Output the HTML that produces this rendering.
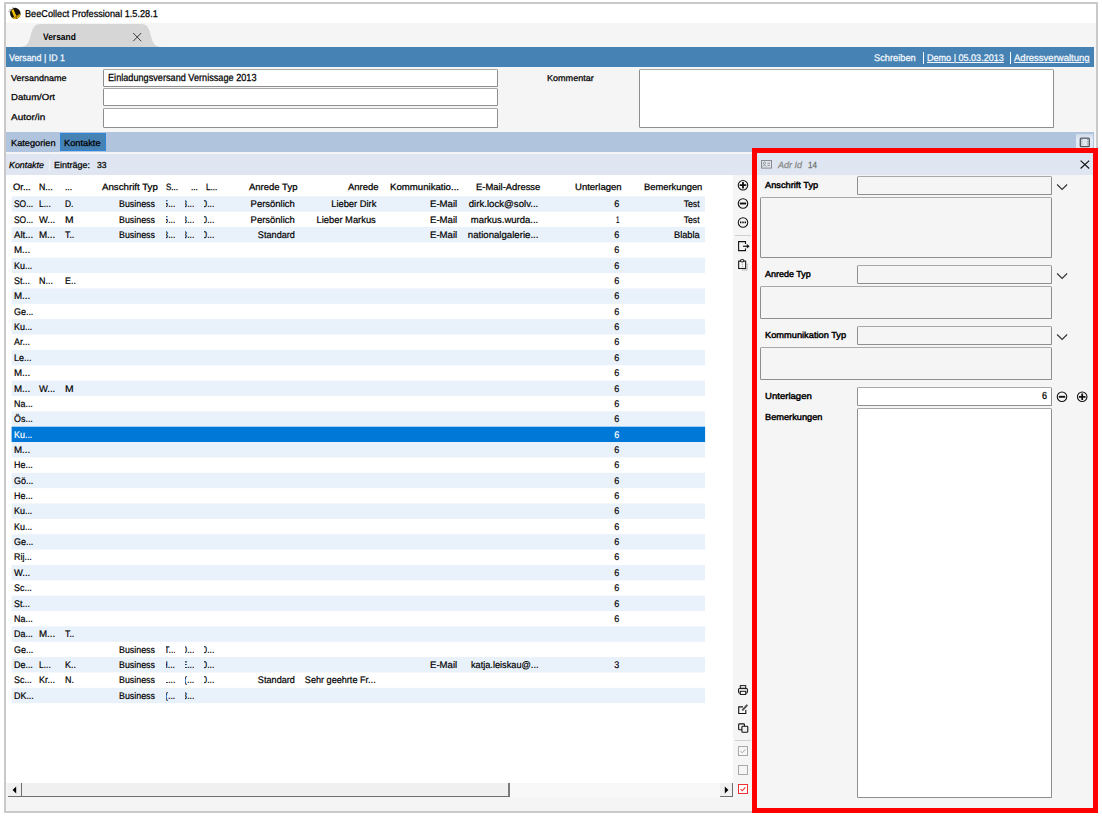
<!DOCTYPE html>
<html lang="de">
<head>
<meta charset="utf-8">
<title>BeeCollect Professional 1.5.28.1</title>
<style>
html,body{margin:0;padding:0;background:#fff;}
body{width:1102px;height:816px;position:relative;overflow:hidden;
  font-family:"Liberation Sans",sans-serif;font-size:11px;color:#000;text-rendering:geometricPrecision;-webkit-text-stroke:0.25px;}
*{box-sizing:border-box;}
.a{position:absolute;}
.t{position:absolute;white-space:nowrap;line-height:14px;height:14px;transform-origin:0 50%;}
.b{font-weight:bold;-webkit-text-stroke:0;}
.sb{font-weight:normal;-webkit-text-stroke:0.42px;}
.i{font-style:italic;}
#frame{left:4px;top:2px;width:1094px;height:811px;border:2px solid #cac8c8;background:#f5f5f5;}
#title{left:6px;top:4px;width:1090px;height:19px;background:#fff;}
#bluebar{left:6px;top:47px;width:1088px;height:20px;background:#4682b4;}
.inp{position:absolute;background:#fff;border:1px solid #8e8e8e;border-top-color:#a9a9a9;border-radius:1.5px;}
.dis{position:absolute;background:#f5f5f5;border:1px solid #8e8e8e;border-top-color:#a9a9a9;border-radius:1.5px;}
#tabbar{left:6px;top:132px;width:1088px;height:20px;background:#b0c4de;}
#seltab{left:60px;top:133px;width:46px;height:18px;background:#4682b4;border:1px solid #2d86d9;}
#khead{left:6px;top:154px;width:746px;height:21px;background:#dfe6f1;}
#tablebg{left:6px;top:175px;width:727px;height:608px;background:#fff;}
.row{position:absolute;left:11.5px;width:693.5px;height:15.36px;-webkit-text-stroke:0.2px;font-size:9.60px;}
.row.sel{color:#fff;}
.c{position:absolute;top:0.57px;white-space:nowrap;line-height:14px;height:14px;transform-origin:0 50%;}
.c.r{transform-origin:100% 50%;}
.k{position:absolute;top:0.57px;height:14px;line-height:14px;overflow:hidden;display:flex;justify-content:flex-end;white-space:nowrap;}
.k i{font-style:normal;flex:none;transform-origin:100% 50%;}
#panelhead{left:757px;top:153px;width:336px;height:22px;background:#dfe6f1;}
#red{left:752px;top:148px;width:346px;height:665px;border:5px solid #ff0000;}
svg{position:absolute;overflow:visible;}
</style>
</head>
<body>
<div id="frame" class="a"></div>
<div id="title" class="a"></div>
<!-- bee icon -->
<svg style="left:6px;top:4px" width="18" height="18" viewBox="0 0 18 18">
  <defs><clipPath id="beeclip"><ellipse cx="9.3" cy="9.4" rx="5.2" ry="5.6" transform="rotate(-20 9.3 9.4)"/></clipPath></defs>
  <path d="M6.6 3.2 L8 4.6 M3.6 5.6 L5.2 6.4" stroke="#555" stroke-width="0.8" fill="none"/>
  <ellipse cx="3.6" cy="7.6" rx="1.6" ry="1.1" fill="#c9c9c9" transform="rotate(35 3.6 7.6)"/>
  <ellipse cx="9.3" cy="9.4" rx="5.2" ry="5.6" fill="#17120b" transform="rotate(-20 9.3 9.4)"/>
  <g clip-path="url(#beeclip)">
    <path d="M5.2 6.0 L7.4 5.2 L10.6 12.4 L8.4 13.4 Z" fill="#f5c400"/>
    <path d="M5.6 14.2 L14.6 9.6 L15.4 12.0 L9 16.2 Z" fill="#e9b000"/>
    <path d="M8.2 13.6 L13.8 10.6 M10.2 15 L10.8 12.4" stroke="#5a4200" stroke-width="0.6" fill="none"/>
  </g>
</svg>
<!-- window tab -->
<svg style="left:19px;top:24px" width="144" height="23" viewBox="0 0 144 23">
  <path d="M0.5 23 C8 23 9.5 19.5 11.5 12 C13.5 4.5 15 0 21.5 0 L122 0 C128.5 0 130 4.5 132 12 C134 19.5 135.5 23 143 23 Z" fill="#d6d6d6"/>
  <path d="M114.2 9 L122.2 17.2 M122.2 9 L114.2 17.2" stroke="#3a3a3a" stroke-width="1" fill="none"/>
</svg>

<!-- blue bar -->
<div id="bluebar" class="a">
  <span class="a" style="left:917px;top:5px;width:1px;height:12px;background:#fbfcfe;"></span>
  <span class="a" style="left:1004px;top:5px;width:1px;height:12px;background:#fbfcfe;"></span>
</div>

<!-- top form -->
<div class="inp" style="left:103px;top:69px;width:395px;height:18px;"></div>
<div class="inp" style="left:103px;top:88px;width:395px;height:18px;"></div>
<div class="inp" style="left:103px;top:108px;width:395px;height:20px;"></div>
<div class="inp" style="left:639px;top:69px;width:415px;height:59px;"></div>

<!-- tab bar -->
<div id="tabbar" class="a"></div>
<div id="seltab" class="a"></div>
<div class="a" style="left:1076px;top:134px;width:17px;height:14px;background:linear-gradient(#cfdbec,#e6ecf5 45%,#dbe4f0);"></div>
<svg style="left:1079px;top:136.6px" width="12" height="11" viewBox="0 0 12 11">
  <rect x="1.3" y="1.1" width="9" height="8.6" rx="1" fill="#dfe6f0" stroke="#50565e" stroke-width="1.3"/>
  <path d="M2.9 2 V9 M8.7 2 V9" stroke="#8d949e" stroke-width="1" stroke-dasharray="1.2 1"/>
</svg>

<!-- Kontakte header -->
<div id="khead" class="a"></div>
<span class="a" style="left:49px;top:159px;width:1px;height:12px;background:#f4f5f8;"></span>

<!-- table -->
<div id="tablebg" class="a"></div>
<svg style="left:0;top:0" width="1102" height="816" viewBox="0 0 1102 816"><rect x="11.6" y="196.30" width="693.5" height="15.36" fill="#e9f1fb"/><rect x="11.6" y="227.02" width="693.5" height="15.36" fill="#e9f1fb"/><rect x="11.6" y="257.74" width="693.5" height="15.36" fill="#e9f1fb"/><rect x="11.6" y="288.46" width="693.5" height="15.36" fill="#e9f1fb"/><rect x="11.6" y="319.18" width="693.5" height="15.36" fill="#e9f1fb"/><rect x="11.6" y="349.90" width="693.5" height="15.36" fill="#e9f1fb"/><rect x="11.6" y="380.62" width="693.5" height="15.36" fill="#e9f1fb"/><rect x="11.6" y="411.34" width="693.5" height="15.36" fill="#e9f1fb"/><rect x="11.6" y="426.70" width="693.5" height="15.36" fill="#0078d7"/><rect x="11.6" y="442.06" width="693.5" height="15.36" fill="#e9f1fb"/><rect x="11.6" y="472.78" width="693.5" height="15.36" fill="#e9f1fb"/><rect x="11.6" y="503.50" width="693.5" height="15.36" fill="#e9f1fb"/><rect x="11.6" y="534.22" width="693.5" height="15.36" fill="#e9f1fb"/><rect x="11.6" y="564.94" width="693.5" height="15.36" fill="#e9f1fb"/><rect x="11.6" y="595.66" width="693.5" height="15.36" fill="#e9f1fb"/><rect x="11.6" y="626.38" width="693.5" height="15.36" fill="#e9f1fb"/><rect x="11.6" y="657.10" width="693.5" height="15.36" fill="#e9f1fb"/><rect x="11.6" y="687.82" width="693.5" height="15.36" fill="#e9f1fb"/></svg>
<div class="row alt" style="top:196.30px"><span class="c" style="top:1.70px;left:2.0px;transform:scaleX(0.8784)">SO...</span><span class="c" style="top:1.70px;left:27.9px;transform:scaleX(0.8851)">L...</span><span class="c" style="top:1.70px;left:53.9px;transform:scaleX(0.8756)">D.</span><span class="c r" style="top:1.70px;right:549.7px;transform:scaleX(0.9222)">Business</span><span class="k" style="top:1.70px;left:154.8px;width:9.0px"><i style="transform:scaleX(0.900)">5...</i></span><span class="k" style="top:1.70px;left:173.3px;width:9.6px"><i style="transform:scaleX(0.900)">3...</i></span><span class="k" style="top:1.70px;left:192.4px;width:10.3px"><i style="transform:scaleX(0.900)">0...</i></span><span class="c r" style="top:1.70px;right:410.1px;transform:scaleX(0.9868)">Persönlich</span><span class="c r" style="top:1.70px;right:329.0px;transform:scaleX(0.9744)">Lieber Dirk</span><span class="c r" style="top:1.70px;right:247.9px;transform:scaleX(1.0006)">E-Mail</span><span class="c r" style="top:1.70px;right:166.8px;transform:scaleX(1.0033)">dirk.lock@solv...</span><span class="c r" style="top:1.70px;right:85.7px;transform:scaleX(0.9371)">6</span><span class="c r" style="top:1.70px;right:5.1px;transform:scaleX(0.9037)">Test</span></div>
<div class="row" style="top:211.66px"><span class="c" style="top:2.34px;left:2.0px;transform:scaleX(0.8784)">SO...</span><span class="c" style="top:2.34px;left:27.9px;transform:scaleX(0.9805)">W...</span><span class="c" style="top:2.34px;left:53.9px;transform:scaleX(1.0761)">M</span><span class="c r" style="top:2.34px;right:549.7px;transform:scaleX(0.9222)">Business</span><span class="k" style="top:2.34px;left:154.8px;width:9.0px"><i style="transform:scaleX(0.900)">5...</i></span><span class="k" style="top:2.34px;left:173.3px;width:9.6px"><i style="transform:scaleX(0.900)">3...</i></span><span class="k" style="top:2.34px;left:192.4px;width:10.3px"><i style="transform:scaleX(0.900)">0...</i></span><span class="c r" style="top:2.34px;right:410.1px;transform:scaleX(0.9868)">Persönlich</span><span class="c r" style="top:2.34px;right:329.0px;transform:scaleX(0.9756)">Lieber Markus</span><span class="c r" style="top:2.34px;right:247.9px;transform:scaleX(1.0006)">E-Mail</span><span class="c r" style="top:2.34px;right:166.8px;transform:scaleX(0.9891)">markus.wurda...</span><span class="c r" style="top:2.34px;right:85.7px;transform:scaleX(0.6372)">1</span><span class="c r" style="top:2.34px;right:5.1px;transform:scaleX(0.9037)">Test</span></div>
<div class="row alt" style="top:227.02px"><span class="c" style="top:1.98px;left:2.0px;transform:scaleX(1.0004)">Alt...</span><span class="c" style="top:1.98px;left:27.9px;transform:scaleX(1.0133)">M...</span><span class="c" style="top:1.98px;left:53.9px;transform:scaleX(0.9183)">T..</span><span class="c r" style="top:1.98px;right:549.7px;transform:scaleX(0.9222)">Business</span><span class="k" style="top:1.98px;left:154.8px;width:9.0px"><i style="transform:scaleX(0.900)">3...</i></span><span class="k" style="top:1.98px;left:173.3px;width:9.6px"><i style="transform:scaleX(0.900)">3...</i></span><span class="k" style="top:1.98px;left:192.4px;width:10.3px"><i style="transform:scaleX(0.900)">0...</i></span><span class="c r" style="top:1.98px;right:410.1px;transform:scaleX(0.9528)">Standard</span><span class="c r" style="top:1.98px;right:247.9px;transform:scaleX(1.0006)">E-Mail</span><span class="c r" style="top:1.98px;right:166.8px;transform:scaleX(1.0028)">nationalgalerie...</span><span class="c r" style="top:1.98px;right:85.7px;transform:scaleX(0.9371)">6</span><span class="c r" style="top:1.98px;right:5.1px;transform:scaleX(0.9637)">Blabla</span></div>
<div class="row" style="top:242.38px"><span class="c" style="top:1.62px;left:2.0px;transform:scaleX(1.0133)">M...</span><span class="c r" style="top:1.62px;right:85.7px;transform:scaleX(0.9371)">6</span></div>
<div class="row alt" style="top:257.74px"><span class="c" style="top:2.26px;left:2.0px;transform:scaleX(0.9300)">Ku...</span><span class="c r" style="top:2.26px;right:85.7px;transform:scaleX(0.9371)">6</span></div>
<div class="row" style="top:273.10px"><span class="c" style="top:1.90px;left:2.0px;transform:scaleX(0.9300)">St...</span><span class="c" style="top:1.90px;left:27.9px;transform:scaleX(0.9300)">N...</span><span class="c" style="top:1.90px;left:53.9px;transform:scaleX(0.9300)">E..</span><span class="c r" style="top:1.90px;right:85.7px;transform:scaleX(0.9371)">6</span></div>
<div class="row alt" style="top:288.46px"><span class="c" style="top:1.54px;left:2.0px;transform:scaleX(1.0133)">M...</span><span class="c r" style="top:1.54px;right:85.7px;transform:scaleX(0.9371)">6</span></div>
<div class="row" style="top:303.82px"><span class="c" style="top:2.18px;left:2.0px;transform:scaleX(0.9300)">Ge...</span><span class="c r" style="top:2.18px;right:85.7px;transform:scaleX(0.9371)">6</span></div>
<div class="row alt" style="top:319.18px"><span class="c" style="top:1.82px;left:2.0px;transform:scaleX(0.9300)">Ku...</span><span class="c r" style="top:1.82px;right:85.7px;transform:scaleX(0.9371)">6</span></div>
<div class="row" style="top:334.54px"><span class="c" style="top:1.46px;left:2.0px;transform:scaleX(0.9300)">Ar...</span><span class="c r" style="top:1.46px;right:85.7px;transform:scaleX(0.9371)">6</span></div>
<div class="row alt" style="top:349.90px"><span class="c" style="top:2.10px;left:2.0px;transform:scaleX(0.9300)">Le...</span><span class="c r" style="top:2.10px;right:85.7px;transform:scaleX(0.9371)">6</span></div>
<div class="row" style="top:365.26px"><span class="c" style="top:1.74px;left:2.0px;transform:scaleX(1.0133)">M...</span><span class="c r" style="top:1.74px;right:85.7px;transform:scaleX(0.9371)">6</span></div>
<div class="row alt" style="top:380.62px"><span class="c" style="top:2.38px;left:2.0px;transform:scaleX(1.0133)">M...</span><span class="c" style="top:2.38px;left:27.9px;transform:scaleX(0.9805)">W...</span><span class="c" style="top:2.38px;left:53.9px;transform:scaleX(1.0761)">M</span><span class="c r" style="top:2.38px;right:85.7px;transform:scaleX(0.9371)">6</span></div>
<div class="row" style="top:395.98px"><span class="c" style="top:2.02px;left:2.0px;transform:scaleX(0.9300)">Na...</span><span class="c r" style="top:2.02px;right:85.7px;transform:scaleX(0.9371)">6</span></div>
<div class="row alt" style="top:411.34px"><span class="c" style="top:1.66px;left:2.0px;transform:scaleX(0.9300)">Ös...</span><span class="c r" style="top:1.66px;right:85.7px;transform:scaleX(0.9371)">6</span></div>
<div class="row sel" style="top:426.70px"><span class="c" style="top:2.30px;left:2.0px;transform:scaleX(0.9300)">Ku...</span><span class="c r" style="top:2.30px;right:85.7px;transform:scaleX(0.9371)">6</span></div>
<div class="row alt" style="top:442.06px"><span class="c" style="top:1.94px;left:2.0px;transform:scaleX(1.0133)">M...</span><span class="c r" style="top:1.94px;right:85.7px;transform:scaleX(0.9371)">6</span></div>
<div class="row" style="top:457.42px"><span class="c" style="top:1.58px;left:2.0px;transform:scaleX(0.9300)">He...</span><span class="c r" style="top:1.58px;right:85.7px;transform:scaleX(0.9371)">6</span></div>
<div class="row alt" style="top:472.78px"><span class="c" style="top:2.22px;left:2.0px;transform:scaleX(0.9300)">Gö...</span><span class="c r" style="top:2.22px;right:85.7px;transform:scaleX(0.9371)">6</span></div>
<div class="row" style="top:488.14px"><span class="c" style="top:1.86px;left:2.0px;transform:scaleX(0.9300)">He...</span><span class="c r" style="top:1.86px;right:85.7px;transform:scaleX(0.9371)">6</span></div>
<div class="row alt" style="top:503.50px"><span class="c" style="top:1.50px;left:2.0px;transform:scaleX(0.9300)">Ku...</span><span class="c r" style="top:1.50px;right:85.7px;transform:scaleX(0.9371)">6</span></div>
<div class="row" style="top:518.86px"><span class="c" style="top:2.14px;left:2.0px;transform:scaleX(0.9300)">Ku...</span><span class="c r" style="top:2.14px;right:85.7px;transform:scaleX(0.9371)">6</span></div>
<div class="row alt" style="top:534.22px"><span class="c" style="top:1.78px;left:2.0px;transform:scaleX(0.9300)">Ge...</span><span class="c r" style="top:1.78px;right:85.7px;transform:scaleX(0.9371)">6</span></div>
<div class="row" style="top:549.58px"><span class="c" style="top:1.42px;left:2.0px;transform:scaleX(0.9300)">Rij...</span><span class="c r" style="top:1.42px;right:85.7px;transform:scaleX(0.9371)">6</span></div>
<div class="row alt" style="top:564.94px"><span class="c" style="top:2.06px;left:2.0px;transform:scaleX(0.9805)">W...</span><span class="c r" style="top:2.06px;right:85.7px;transform:scaleX(0.9371)">6</span></div>
<div class="row" style="top:580.30px"><span class="c" style="top:1.70px;left:2.0px;transform:scaleX(0.9300)">Sc...</span><span class="c r" style="top:1.70px;right:85.7px;transform:scaleX(0.9371)">6</span></div>
<div class="row alt" style="top:595.66px"><span class="c" style="top:2.34px;left:2.0px;transform:scaleX(0.9300)">St...</span><span class="c r" style="top:2.34px;right:85.7px;transform:scaleX(0.9371)">6</span></div>
<div class="row" style="top:611.02px"><span class="c" style="top:1.98px;left:2.0px;transform:scaleX(0.9300)">Na...</span><span class="c r" style="top:1.98px;right:85.7px;transform:scaleX(0.9371)">6</span></div>
<div class="row alt" style="top:626.38px"><span class="c" style="top:1.62px;left:2.0px;transform:scaleX(0.9300)">Da...</span><span class="c" style="top:1.62px;left:27.9px;transform:scaleX(1.0133)">M...</span><span class="c" style="top:1.62px;left:53.9px;transform:scaleX(0.9183)">T..</span></div>
<div class="row" style="top:641.74px"><span class="c" style="top:2.26px;left:2.0px;transform:scaleX(0.9300)">Ge...</span><span class="c r" style="top:2.26px;right:549.7px;transform:scaleX(0.9222)">Business</span><span class="k" style="top:2.26px;left:154.8px;width:9.0px"><i style="transform:scaleX(0.900)">T...</i></span><span class="k" style="top:2.26px;left:173.3px;width:9.6px"><i style="transform:scaleX(0.900)">0...</i></span><span class="k" style="top:2.26px;left:192.4px;width:10.3px"><i style="transform:scaleX(0.900)">0...</i></span></div>
<div class="row alt" style="top:657.10px"><span class="c" style="top:1.90px;left:2.0px;transform:scaleX(0.9300)">De...</span><span class="c" style="top:1.90px;left:27.9px;transform:scaleX(0.8851)">L...</span><span class="c" style="top:1.90px;left:53.9px;transform:scaleX(0.9300)">K..</span><span class="c r" style="top:1.90px;right:549.7px;transform:scaleX(0.9222)">Business</span><span class="k" style="top:1.90px;left:154.8px;width:9.0px"><i style="transform:scaleX(0.900)">H...</i></span><span class="k" style="top:1.90px;left:173.3px;width:9.6px"><i style="transform:scaleX(0.900)">E...</i></span><span class="k" style="top:1.90px;left:192.4px;width:10.3px"><i style="transform:scaleX(0.900)">0...</i></span><span class="c r" style="top:1.90px;right:247.9px;transform:scaleX(1.0006)">E-Mail</span><span class="c r" style="top:1.90px;right:166.8px;transform:scaleX(0.9585)">katja.leiskau@...</span><span class="c r" style="top:1.90px;right:85.7px;transform:scaleX(0.9371)">3</span></div>
<div class="row" style="top:672.46px"><span class="c" style="top:1.54px;left:2.0px;transform:scaleX(0.9300)">Sc...</span><span class="c" style="top:1.54px;left:27.9px;transform:scaleX(0.9300)">Kr...</span><span class="c" style="top:1.54px;left:53.9px;transform:scaleX(0.9300)">N.</span><span class="c r" style="top:1.54px;right:549.7px;transform:scaleX(0.9222)">Business</span><span class="k" style="top:1.54px;left:154.8px;width:9.0px"><i style="transform:scaleX(0.900)">L...</i></span><span class="k" style="top:1.54px;left:173.3px;width:9.6px"><i style="transform:scaleX(0.900)">(...</i></span><span class="k" style="top:1.54px;left:192.4px;width:10.3px"><i style="transform:scaleX(0.900)">0...</i></span><span class="c r" style="top:1.54px;right:410.1px;transform:scaleX(0.9528)">Standard</span><span class="c r" style="top:1.54px;right:329.0px;transform:scaleX(0.9484)">Sehr geehrte Fr...</span></div>
<div class="row alt" style="top:687.82px"><span class="c" style="top:2.18px;left:2.0px;transform:scaleX(0.9300)">DK...</span><span class="c r" style="top:2.18px;right:549.7px;transform:scaleX(0.9222)">Business</span><span class="k" style="top:2.18px;left:154.8px;width:9.0px"><i style="transform:scaleX(0.900)">(...</i></span><span class="k" style="top:2.18px;left:173.3px;width:9.6px"><i style="transform:scaleX(0.900)">3...</i></span></div>

<!-- scrollbar -->
<div class="a" style="left:8px;top:783px;width:725px;height:14px;background:#f8f8f8;"></div>
<div class="a" style="left:8px;top:783px;width:13px;height:14px;background:#f0f0f0;border-bottom:1px solid #6e6e6e;"></div>
<div class="a" style="left:21px;top:783px;width:489px;height:14px;background:#f0f0f0;border-left:1px solid #6e6e6e;border-right:2px solid #7a7a7a;border-bottom:1px solid #6e6e6e;"></div>
<div class="a" style="left:720px;top:783px;width:13px;height:14px;background:#f0f0f0;border-right:1px solid #6e6e6e;border-bottom:1px solid #6e6e6e;"></div>
<svg style="left:12px;top:786px" width="5" height="8" viewBox="0 0 5 8"><path d="M4.2 0.6 L0.6 4 L4.2 7.4 Z" fill="#000"/></svg>
<svg style="left:724px;top:786px" width="5" height="8" viewBox="0 0 5 8"><path d="M0.8 0.6 L4.4 4 L0.8 7.4 Z" fill="#000"/></svg>

<!-- icon column -->
<div class="a" style="left:733px;top:175px;width:19px;height:636px;background:#f5f5f5;"></div>
<svg style="left:737px;top:179px" width="12" height="12" viewBox="0 0 12 12">
  <circle cx="6" cy="6.2" r="4.75" fill="none" stroke="#111" stroke-width="1.1"/>
  <path d="M2.7 6.2 H9.3 M6 2.9 V9.5" stroke="#111" stroke-width="1.8"/>
</svg>
<svg style="left:737px;top:197px" width="12" height="12" viewBox="0 0 12 12">
  <circle cx="6" cy="6.5" r="4.75" fill="none" stroke="#111" stroke-width="1.1"/>
  <path d="M2.8 6.5 H9.2" stroke="#111" stroke-width="1.9"/>
</svg>
<svg style="left:737px;top:216px" width="12" height="12" viewBox="0 0 12 12">
  <circle cx="6" cy="6.4" r="4.75" fill="none" stroke="#111" stroke-width="1.05"/>
  <path d="M3 6.4 H9" stroke="#000" stroke-width="1.6" stroke-dasharray="1.4 0.9"/>
</svg>
<div class="a" style="left:735px;top:235px;width:16px;height:1px;background:#d0d0d0;"></div>
<svg style="left:738px;top:241px" width="12" height="11" viewBox="0 0 12 11">
  <path d="M7.5 3.1 V0.6 H0.6 V9.6 H7.5 V7.5" fill="none" stroke="#151515" stroke-width="1.1"/>
  <path d="M5 5.25 H9.4" fill="none" stroke="#151515" stroke-width="1.2"/>
  <path d="M8.8 3.1 L11.7 5.25 L8.8 7.4 Z" fill="#151515"/>
</svg>
<svg style="left:738px;top:259px" width="11" height="12" viewBox="0 0 11 12">
  <rect x="0.65" y="2.1" width="7.0" height="7.4" fill="none" stroke="#1c1c1c" stroke-width="1.1"/>
  <ellipse cx="4.15" cy="1.7" rx="1.8" ry="1.2" fill="#f5f5f5" stroke="#1c1c1c" stroke-width="1.05"/>
  <path d="M4.4 4.6 V9" stroke="#9a9a9a" stroke-width="0.9" stroke-dasharray="1.2 1"/>
  <path d="M4.4 11 H9.2 V4.8" fill="none" stroke="#8a8a8a" stroke-width="1" stroke-dasharray="1.1 0.9"/>
</svg>
<!-- lower icons -->
<svg style="left:738px;top:685px" width="10" height="10" viewBox="0 0 10 10">
  <rect x="2.3" y="0.6" width="5.4" height="3" fill="none" stroke="#1a1a1a" stroke-width="1"/>
  <rect x="0.55" y="3.3" width="8.9" height="4.9" rx="1.5" fill="none" stroke="#1a1a1a" stroke-width="1.1"/>
  <rect x="2.3" y="6.3" width="5.4" height="3.2" fill="#f5f5f5" stroke="#1a1a1a" stroke-width="1"/>
</svg>
<svg style="left:738px;top:703px" width="12" height="12" viewBox="0 0 12 12">
  <path d="M5 3.9 H0.7 V10.5 H7.8 V6.9" fill="none" stroke="#151515" stroke-width="1.1"/>
  <path d="M4.3 7.3 L9.3 1.9" fill="none" stroke="#3a3a3a" stroke-width="1.9"/>
  <path d="M4.3 7.3 L9.3 1.9" fill="none" stroke="#8c8c8c" stroke-width="0.5"/>
</svg>
<svg style="left:738px;top:722.5px" width="11" height="10" viewBox="0 0 11 10">
  <rect x="0.65" y="0.9" width="5.8" height="5.8" rx="0.8" fill="none" stroke="#151515" stroke-width="1.1"/>
  <rect x="3.9" y="3.2" width="5.9" height="6.1" rx="0.9" fill="#f0f0f0" stroke="#151515" stroke-width="1.1"/>
</svg>
<div class="a" style="left:735px;top:740px;width:16px;height:1px;background:#d0d0d0;"></div>
<svg style="left:738px;top:746px" width="10" height="10" viewBox="0 0 10 10">
  <rect x="0.5" y="0.5" width="9" height="9" fill="none" stroke="#a9a9a9" stroke-width="1"/>
  <path d="M2.6 5.2 L4.2 6.8 L7.4 3.4" fill="none" stroke="#a9a9a9" stroke-width="1"/>
</svg>
<svg style="left:738px;top:765px" width="10" height="10" viewBox="0 0 10 10">
  <rect x="0.5" y="0.5" width="9" height="9" fill="none" stroke="#a9a9a9" stroke-width="1"/>
</svg>
<svg style="left:738px;top:783.5px" width="10" height="10" viewBox="0 0 10 10">
  <rect x="0.5" y="0.5" width="9" height="9" fill="#fff" stroke="#f03030" stroke-width="1"/>
  <path d="M2.6 5.2 L4.2 6.8 L7.4 3.4" fill="none" stroke="#f03030" stroke-width="1.1"/>
</svg>

<!-- right panel -->
<div id="panelhead" class="a"></div>
<svg style="left:761px;top:160px" width="11" height="9" viewBox="0 0 11 9">
  <rect x="0.5" y="0.5" width="10" height="7.6" fill="none" stroke="#8a8a8a" stroke-width="1"/>
  <circle cx="3.4" cy="3.2" r="1.1" fill="none" stroke="#8a8a8a" stroke-width="0.8"/>
  <path d="M1.8 6.6 C1.8 4.6 5 4.6 5 6.6" fill="none" stroke="#8a8a8a" stroke-width="0.8"/>
  <path d="M6.4 3.2 H9 M6.4 5.4 H9" stroke="#8a8a8a" stroke-width="0.9"/>
</svg>
<svg style="left:1080px;top:160px" width="10" height="9" viewBox="0 0 10 9">
  <path d="M0.6 0.6 L9.2 8.5 M9.2 0.6 L0.6 8.5" stroke="#151515" stroke-width="1.15" fill="none"/>
</svg>
<div class="dis" style="left:857px;top:176px;width:195px;height:19px;"></div>
<svg style="left:1056px;top:183.5px" width="12" height="7" viewBox="0 0 12 7"><path d="M1.1 0.5 L6.1 5.5 L11.1 0.5" fill="none" stroke="#333" stroke-width="1.15"/></svg>
<div class="dis" style="left:760px;top:197px;width:292px;height:61px;"></div>
<div class="dis" style="left:857px;top:265px;width:195px;height:19px;"></div>
<svg style="left:1056px;top:272.7px" width="12" height="7" viewBox="0 0 12 7"><path d="M1.1 0.5 L6.1 5.5 L11.1 0.5" fill="none" stroke="#333" stroke-width="1.15"/></svg>
<div class="dis" style="left:760px;top:286px;width:292px;height:33px;"></div>
<div class="dis" style="left:857px;top:326px;width:195px;height:19px;"></div>
<svg style="left:1056px;top:333.5px" width="12" height="7" viewBox="0 0 12 7"><path d="M1.1 0.5 L6.1 5.5 L11.1 0.5" fill="none" stroke="#333" stroke-width="1.15"/></svg>
<div class="dis" style="left:760px;top:347px;width:292px;height:33px;"></div>
<div class="inp" style="left:857px;top:387px;width:195px;height:19px;"></div>
<svg style="left:1056px;top:391px" width="12" height="12" viewBox="0 0 12 12">
  <circle cx="6" cy="5.8" r="4.75" fill="none" stroke="#111" stroke-width="1.1"/>
  <path d="M2.8 5.8 H9.2" stroke="#111" stroke-width="1.9"/>
</svg>
<svg style="left:1076px;top:391px" width="12" height="12" viewBox="0 0 12 12">
  <circle cx="6.2" cy="5.8" r="4.75" fill="none" stroke="#111" stroke-width="1.1"/>
  <path d="M2.9 5.8 H9.5 M6.2 2.5 V9.1" stroke="#111" stroke-width="1.8"/>
</svg>
<div class="inp" style="left:857px;top:408px;width:195px;height:390px;"></div>

<span class="t" style="top:8.00px;font-size:9.90px;left:25.00px;transform:scaleX(0.9269);">BeeCollect Professional 1.5.28.1</span>
<span class="t b" style="top:30.00px;font-size:9.40px;left:43.40px;transform:scaleX(0.8992);">Versand</span>
<span class="t" style="top:52.00px;font-size:9.60px;left:8.60px;transform:scaleX(0.9221);color:#f4f8fc;">Versand | ID 1</span>
<span class="t" style="top:52.00px;font-size:9.60px;left:874.30px;transform:scaleX(0.9653);color:#f4f8fc;">Schreiben</span>
<span class="t" style="top:52.00px;font-size:9.60px;left:927.00px;transform:scaleX(0.9431);color:#f4f8fc;text-decoration:underline;">Demo | 05.03.2013</span>
<span class="t" style="top:52.00px;font-size:9.60px;left:1014.40px;transform:scaleX(0.9914);color:#f4f8fc;text-decoration:underline;">Adressverwaltung</span>
<span class="t" style="top:71.00px;font-size:8.70px;left:11.00px;transform:scaleX(1.0334);">Versandname</span>
<span class="t" style="top:90.00px;font-size:8.70px;left:11.00px;transform:scaleX(1.0982);">Datum/Ort</span>
<span class="t" style="top:110.00px;font-size:8.70px;left:11.00px;transform:scaleX(1.1456);">Autor/in</span>
<span class="t" style="top:72.00px;font-size:10.30px;left:108.20px;transform:scaleX(0.8884);">Einladungsversand Vernissage 2013</span>
<span class="t" style="top:71.00px;font-size:8.70px;left:547.20px;transform:scaleX(1.0423);">Kommentar</span>
<span class="t" style="top:136.00px;font-size:8.90px;left:10.50px;transform:scaleX(1.0390);">Kategorien</span>
<span class="t" style="top:136.00px;font-size:8.90px;left:64.40px;transform:scaleX(1.0448);">Kontakte</span>
<span class="t i" style="top:158.00px;font-size:8.80px;left:8.50px;transform:scaleX(1.0051);">Kontakte</span>
<span class="t" style="top:158.00px;font-size:8.80px;left:53.90px;transform:scaleX(1.0253);">Einträge:</span>
<span class="t" style="top:158.00px;font-size:8.80px;left:96.80px;transform:scaleX(0.9709);">33</span>
<span class="t" style="top:180.00px;font-size:9.20px;left:13.30px;transform:scaleX(1.0198);">Or...</span>
<span class="t" style="top:180.00px;font-size:9.20px;left:39.40px;transform:scaleX(0.9515);">N...</span>
<span class="t" style="top:180.00px;font-size:9.20px;left:65.40px;transform:scaleX(0.9141);">...</span>
<span class="t" style="top:180.00px;font-size:9.20px;left:102.00px;transform:scaleX(1.0546);">Anschrift Typ</span>
<span class="t" style="top:180.00px;font-size:9.20px;left:165.60px;transform:scaleX(0.8705);">S...</span>
<span class="t" style="top:180.00px;font-size:9.20px;left:190.60px;transform:scaleX(0.8880);">...</span>
<span class="t" style="top:180.00px;font-size:9.20px;left:205.90px;transform:scaleX(0.8694);">L...</span>
<span class="t" style="top:180.00px;font-size:9.20px;left:249.10px;transform:scaleX(1.0343);">Anrede Typ</span>
<span class="t" style="top:180.00px;font-size:9.20px;left:347.80px;transform:scaleX(1.0295);">Anrede</span>
<span class="t" style="top:180.00px;font-size:9.20px;left:390.30px;transform:scaleX(1.0475);">Kommunikatio...</span>
<span class="t" style="top:180.00px;font-size:9.20px;left:476.10px;transform:scaleX(1.0239);">E-Mail-Adresse</span>
<span class="t" style="top:180.00px;font-size:9.20px;left:574.60px;transform:scaleX(1.0368);">Unterlagen</span>
<span class="t" style="top:180.00px;font-size:9.20px;left:643.70px;transform:scaleX(1.0192);">Bemerkungen</span>
<span class="t i" style="top:158.00px;font-size:9.10px;left:778.20px;transform:scaleX(0.9851);color:#868686;">Adr Id</span>
<span class="t" style="top:158.00px;font-size:9.10px;left:808.40px;transform:scaleX(0.8898);color:#707070;">14</span>
<span class="t sb" style="top:178.00px;font-size:8.80px;left:764.80px;transform:scaleX(1.0483);">Anschrift Typ</span>
<span class="t sb" style="top:267.00px;font-size:8.80px;left:764.80px;transform:scaleX(1.0202);">Anrede Typ</span>
<span class="t sb" style="top:328.00px;font-size:8.80px;left:764.80px;transform:scaleX(1.0524);">Kommunikation Typ</span>
<span class="t sb" style="top:389.00px;font-size:8.80px;left:764.80px;transform:scaleX(1.0875);">Unterlagen</span>
<span class="t sb" style="top:410.00px;font-size:8.80px;left:764.80px;transform:scaleX(1.0498);">Bemerkungen</span>
<span class="t" style="top:390.00px;font-size:10.20px;left:1041.90px;transform:scaleX(0.8825);">6</span>
<div id="red" class="a"></div>
</body>
</html>
